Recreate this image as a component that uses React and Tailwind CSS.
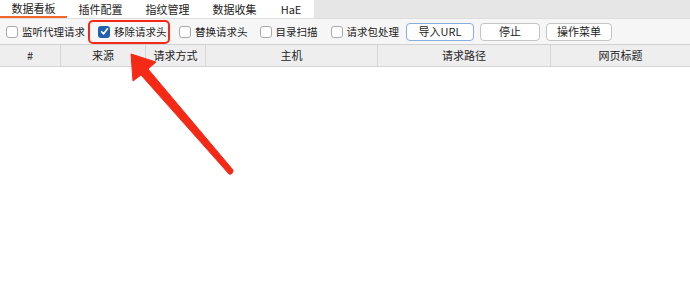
import React from 'react';

const tabs = [
  { label: '数据看板', w: 'w-[67px]', active: true },
  { label: '插件配置', w: 'w-[67px]' },
  { label: '指纹管理', w: 'w-[67px]' },
  { label: '数据收集', w: 'w-[67px]' },
  { label: 'HaE', w: 'w-[46px]' },
];

const columns = [
  { label: '#', w: 'w-[61px]' },
  { label: '来源', w: 'w-[85px]' },
  { label: '请求方式', w: 'w-[60px]' },
  { label: '主机', w: 'w-[172px]' },
  { label: '请求路径', w: 'w-[173px]' },
  { label: '网页标题', w: 'flex-1' },
];

function Box({ checked }) {
  if (checked) {
    return (
      <span className="w-[12px] h-[12px] rounded-[3px] bg-[#2360ad] flex items-center justify-center shrink-0">
        <svg width="9" height="9" viewBox="0 0 10 10">
          <path d="M1.8 5.2 L4 7.6 L8.3 2" fill="none" stroke="#fff" strokeWidth="1.8" strokeLinecap="round" strokeLinejoin="round" />
        </svg>
      </span>
    );
  }
  return <span className="w-[12px] h-[12px] rounded-[3px] bg-white border border-[#a9a9a9] shrink-0" />;
}

function Check({ label, checked, className }) {
  return (
    <div className={`flex items-center gap-[4px] shrink-0 whitespace-nowrap ${className || ''}`}>
      <Box checked={checked} />
      <span className="text-[10.5px] text-[#222]">{label}</span>
    </div>
  );
}

function Btn({ label, w, focus }) {
  return (
    <button
      className={`h-[18px] ${w} rounded-[4px] bg-white text-[11px] text-[#222] flex items-center justify-center border ${
        focus ? 'border-[#86aee0]' : 'border-[#c4c4c4]'
      }`}
    >
      {label}
    </button>
  );
}

export default function App() {
  return (
    <div
      className="relative w-[690px] h-[293px] bg-white overflow-hidden"
      style={{ fontFamily: '"Noto Sans CJK SC", "Noto Sans", sans-serif' }}
    >
      {/* tab bar */}
      <div className="flex h-[18px] bg-[#e6e6e6]">
        {tabs.map((t) => (
          <div
            key={t.label}
            className={`${t.w} h-full bg-white flex items-center justify-center text-[11px] text-[#222] ${
              t.active ? 'border-b-2 border-[#f0662e]' : ''
            }`}
          >
            {t.label}
          </div>
        ))}
      </div>

      {/* toolbar */}
      <div className="h-[27px] bg-[#f6f6f6] border-t border-[#dedede] border-b border-b-[#d0d0d0] flex items-center pl-[6px]">
        <Check label="监听代理请求" />
        <div className="ml-[3px] h-[24px] w-[82px] shrink-0 border-2 border-[#f42a17] rounded-[5px] flex items-center pl-[8px]">
          <Check label="移除请求头" checked />
        </div>
        <Check label="替换请求头" className="ml-[9px]" />
        <Check label="目录扫描" className="ml-[12px]" />
        <Check label="请求包处理" className="ml-[13px]" />
        <div className="ml-[7px] flex gap-[6px] shrink-0">
          <Btn label="导入URL" w="w-[68px]" focus />
          <Btn label="停止" w="w-[60px]" />
          <Btn label="操作菜单" w="w-[66px]" />
        </div>
      </div>

      {/* table header */}
      <div className="flex h-[22px] bg-[#eeeeee] border-b border-[#d6d6d6]">
        {columns.map((c, i) => (
          <div
            key={c.label}
            className={`${c.w} h-full flex items-center justify-center text-[11px] text-[#222] ${
              i < columns.length - 1 ? 'border-r border-[#d6d6d6]' : ''
            }`}
          >
            {c.label}
          </div>
        ))}
      </div>

      {/* annotation arrow */}
      <svg className="absolute left-0 top-0 pointer-events-none" width="690" height="293">
        <path
          d="M131 54 L156 62 L148 69 L233 170 Q233 175 229 174 L141 75 L133 81 Z"
          fill="#f42a17"
          stroke="#f42a17"
          strokeWidth="1"
          strokeLinejoin="round"
        />
      </svg>
    </div>
  );
}
